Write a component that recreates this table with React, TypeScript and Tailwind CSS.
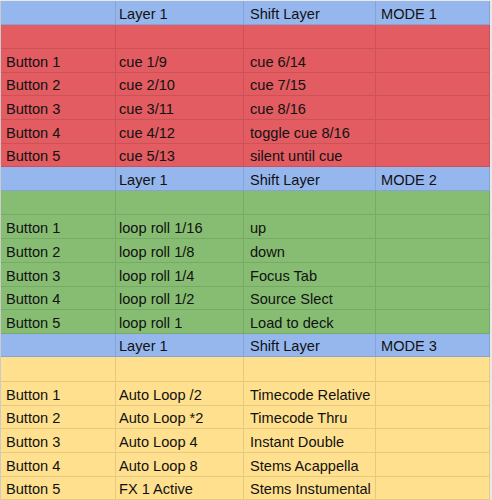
import React from "react";

type Section = {
  mode: string;
  bg: string;
  rows: [string, string, string][];
};

const sections: Section[] = [
  {
    mode: "MODE 1",
    bg: "bg-[#e25c61]",
    rows: [
      ["Button 1", "cue 1/9", "cue 6/14"],
      ["Button 2", "cue 2/10", "cue 7/15"],
      ["Button 3", "cue 3/11", "cue 8/16"],
      ["Button 4", "cue 4/12", "toggle cue 8/16"],
      ["Button 5", "cue 5/13", "silent until cue"],
    ],
  },
  {
    mode: "MODE 2",
    bg: "bg-[#87bd73]",
    rows: [
      ["Button 1", "loop roll 1/16", "up"],
      ["Button 2", "loop roll 1/8", "down"],
      ["Button 3", "loop roll 1/4", "Focus Tab"],
      ["Button 4", "loop roll 1/2", "Source Slect"],
      ["Button 5", "loop roll 1", "Load to deck"],
    ],
  },
  {
    mode: "MODE 3",
    bg: "bg-[#fee08e]",
    rows: [
      ["Button 1", "Auto Loop /2", "Timecode Relative"],
      ["Button 2", "Auto Loop *2", "Timecode Thru"],
      ["Button 3", "Auto Loop 4", "Instant Double"],
      ["Button 4", "Auto Loop 8", "Stems Acappella"],
      ["Button 5", "FX 1 Active", "Stems Instumental"],
    ],
  },
];

function Row({
  cells,
  bg,
  h,
}: {
  cells: string[];
  bg: string;
  h: string;
}) {
  const widths = ["w-[115px] pl-[5px]", "w-[128px] pl-[3px]", "w-[132px] pl-[6px]", "w-[114px] pl-[5px]"];
  return (
    <div className={`flex ${h} ${bg}`}>
      {cells.map((c, i) => (
        <div
          key={i}
          className={`${widths[i]} shrink-0 flex items-end pb-[2px] border-r border-b border-[rgba(0,0,0,0.1)] text-[14.6px] leading-[16px] text-[#111] whitespace-nowrap overflow-hidden`}
        >
          {c}
        </div>
      ))}
    </div>
  );
}

export default function App() {
  return (
    <div
      className="w-[492px] h-[500px] overflow-hidden bg-[#e8e8e8] pt-[1px]"
      style={{ fontFamily: '"Liberation Sans", Arial, sans-serif' }}
    >
      <div className="w-[490px] border-l border-[rgba(0,0,0,0.12)]">
        {sections.map((s) => (
          <div key={s.mode}>
            <Row cells={["", "Layer 1", "Shift Layer", s.mode]} bg="bg-[#95b7ee]" h="h-[23.5px]" />
            <Row cells={["", "", "", ""]} bg={s.bg} h="h-[24.5px]" />
            {s.rows.map((r) => (
              <Row key={r[0]} cells={[r[0], r[1], r[2], ""]} bg={s.bg} h="h-[23.7px]" />
            ))}
          </div>
        ))}
      </div>
    </div>
  );
}
